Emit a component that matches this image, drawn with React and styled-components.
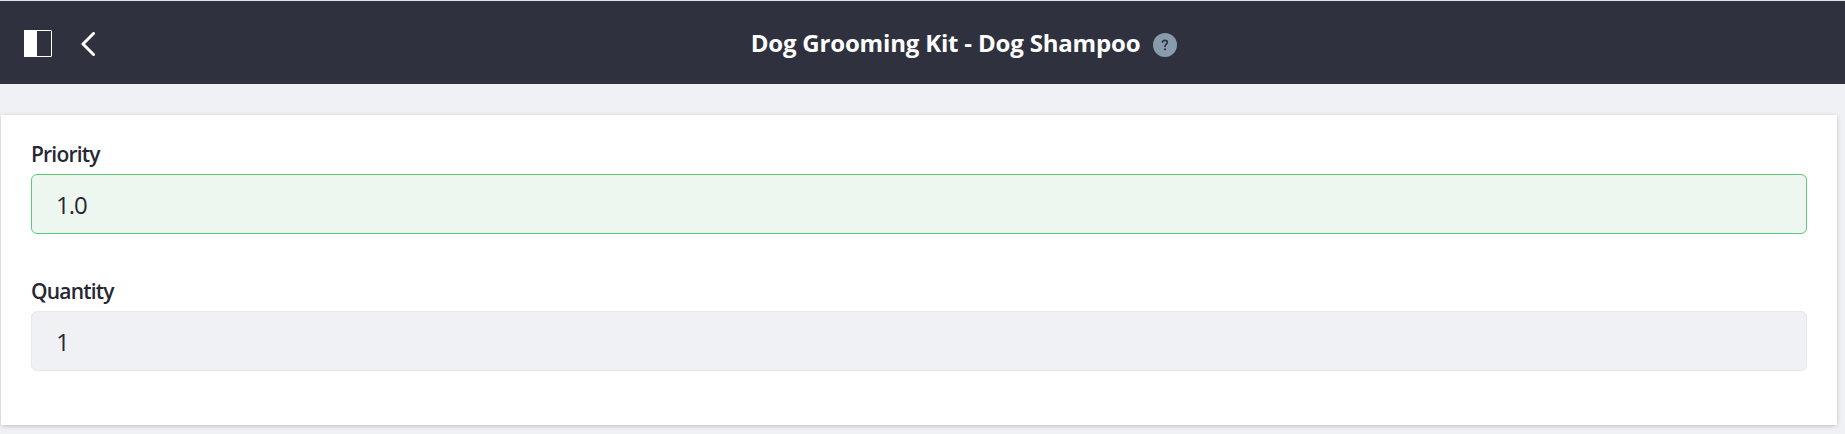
import React from "react";
import styled, { createGlobalStyle } from "styled-components";

const GlobalStyle = createGlobalStyle`
  *, *::before, *::after { box-sizing: border-box; }
  body {
    margin: 0;
    background: #f0f1f5;
    color: #272833;
    font-family: "Open Sans", "Noto Sans", sans-serif;
  }
`;

const Page = styled.div`
  height: 434px;
  overflow: hidden;
  border-top: 1px solid #dfe1e2;
`;

const Header = styled.header`
  display: grid;
  grid-template-columns: 1fr auto 1fr;
  align-items: center;
  height: 83px;
  padding: 0 24px;
  background: #30313f;
  color: #fff;
`;

const Actions = styled.div`
  display: flex;
  align-items: center;
  gap: 29px;
  padding-top: 2px;
`;

const IconButton = styled.button`
  display: flex;
  padding: 0;
  border: 0;
  background: none;
  color: inherit;
`;

const TitleGroup = styled.div`
  display: flex;
  align-items: center;
  gap: 13px;
  margin-left: 83px;
`;

const Title = styled.h1`
  margin: 0;
  font-size: 24px;
  font-weight: 700;
  line-height: 36px;
  letter-spacing: -0.18px;
  white-space: nowrap;
`;

const Help = styled.span`
  display: flex;
  align-items: center;
  justify-content: center;
  width: 24px;
  height: 24px;
  margin-top: 5px;
  border-radius: 50%;
  background: #869cad;
  color: #30313f;
`;

const Sheet = styled.main`
  display: flex;
  flex-direction: column;
  gap: 41px;
  height: 310px;
  margin: 31px 8px 0 1px;
  padding: 23px 30px 0;
  background: #fff;
  box-shadow: 0 1px 5px -1px rgba(0, 0, 0, 0.3);
`;

const Field = styled.div`
  display: flex;
  flex-direction: column;
  gap: 4px;
`;

const Label = styled.label`
  font-size: 21px;
  font-weight: 600;
  line-height: 32px;
  letter-spacing: -0.8px;
`;

const Input = styled.input`
  width: 100%;
  height: 60px;
  padding: 1px 24px 0;
  border: 1px solid ${({ $valid }) => ($valid ? "#5aca75" : "#e7e7ed")};
  border-radius: 6px;
  background: ${({ $valid }) => ($valid ? "#edf7f0" : "#f0f1f5")};
  color: #272833;
  font: 400 24px "Open Sans", "Noto Sans", sans-serif;
  letter-spacing: -1px;
  outline: none;
`;

export default function App() {
  return (
    <>
      <GlobalStyle />
      <Page>
        <Header>
          <Actions>
            <IconButton aria-label="Toggle menu">
              <svg width="28" height="27" viewBox="0 0 28 27" fill="none">
                <rect x="0.5" y="0.5" width="27" height="26" rx="0.5" stroke="currentColor" />
                <path d="M0 0h13v27H0z" fill="currentColor" />
              </svg>
            </IconButton>
            <IconButton aria-label="Back">
              <svg width="14" height="24" viewBox="0 0 14 24" fill="none">
                <path d="M12.500 1.500L2 12l10.500 10.500" stroke="currentColor" strokeWidth="3" strokeLinecap="round" strokeLinejoin="round" />
              </svg>
            </IconButton>
          </Actions>
          <TitleGroup>
            <Title>Dog Grooming Kit - Dog Shampoo</Title>
            <Help aria-label="Help">
              <svg width="8" height="12" viewBox="0 0 8 12" fill="none">
                <path d="M1.500 3.100C1.700 1.800 2.600 1.300 3.900 1.300c1.500 0 2.400.8 2.400 2C6.300 5 4 5.100 4 7.300" stroke="currentColor" strokeWidth="1.700" strokeLinecap="round" />
                <circle cx="4" cy="10.300" r="1.100" fill="currentColor" />
              </svg>
            </Help>
          </TitleGroup>
        </Header>
        <Sheet>
          <Field>
            <Label htmlFor="priority">Priority</Label>
            <Input id="priority" $valid defaultValue="1.0" />
          </Field>
          <Field>
            <Label htmlFor="quantity">Quantity</Label>
            <Input id="quantity" readOnly value="1" />
          </Field>
        </Sheet>
      </Page>
    </>
  );
}
